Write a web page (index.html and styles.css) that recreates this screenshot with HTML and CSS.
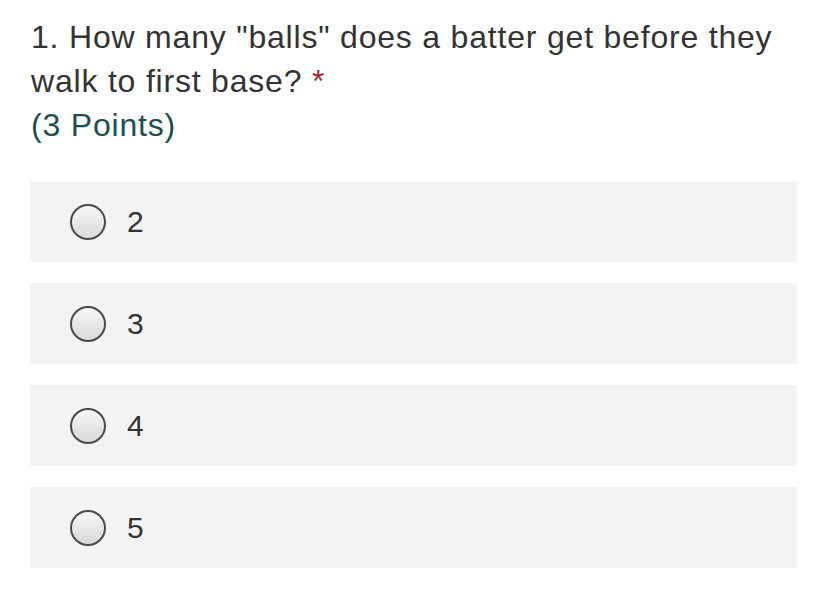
FILE: index.html
```html
<!DOCTYPE html>
<html>
<head>
<meta charset="utf-8">
<link rel="stylesheet" href="styles.css">
</head>
<body>
<div class="question">
  <div class="title">1. How many "balls" does a batter get before they walk to first base? <span class="req">*</span></div>
  <div class="points">(3 Points)</div>
  <div class="options">
    <label class="option"><span class="radio"></span><span class="label">2</span></label>
    <label class="option"><span class="radio"></span><span class="label">3</span></label>
    <label class="option"><span class="radio"></span><span class="label">4</span></label>
    <label class="option"><span class="radio"></span><span class="label">5</span></label>
  </div>
</div>
</body>
</html>
```
FILE: styles.css
```css
html, body {
  margin: 0;
  padding: 0;
  background: #fff;
}
body {
  font-family: "Liberation Sans", Arial, sans-serif;
  color: #333;
}
.question {
  padding: 15px 28px 0 30px;
}
.title {
  font-size: 32px;
  line-height: 44px;
  letter-spacing: 0.8px;
  padding-left: 1px;
}
.req {
  color: #a4262c;
}
.points {
  font-size: 32px;
  line-height: 44px;
  letter-spacing: 0.8px;
  color: #1d4f4f;
  padding-left: 1px;
}
.options {
  display: flex;
  flex-direction: column;
  gap: 21px;
  margin-top: 34px;
  margin-right: 3px;
}
.option {
  display: flex;
  align-items: center;
  height: 81px;
  background: #f3f3f3;
  padding-left: 40px;
}
.radio {
  width: 32px;
  height: 32px;
  border: 2px solid #4a4a4a;
  border-radius: 50%;
  background: linear-gradient(#f8f8f8, #d8d8d8);
  flex: none;
}
.label {
  font-size: 30px;
  margin-left: 21px;
}
```
